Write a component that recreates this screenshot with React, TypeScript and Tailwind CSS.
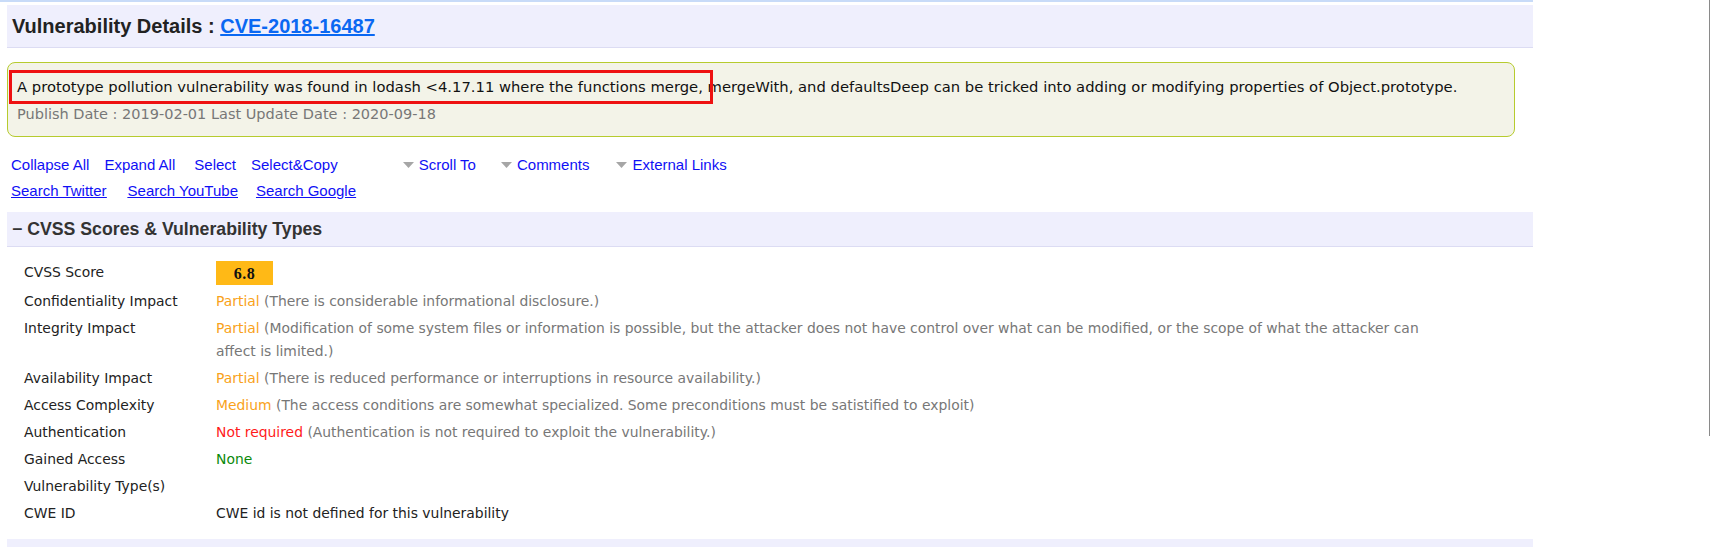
const rows: { label: string; value?: string; tone?: string; note?: string; plain?: string; score?: boolean }[] = [
  { label: "CVSS Score", score: true },
  { label: "Confidentiality Impact", value: "Partial", tone: "text-[#f9a21a]", note: "(There is considerable informational disclosure.)" },
  {
    label: "Integrity Impact",
    value: "Partial",
    tone: "text-[#f9a21a]",
    note: "(Modification of some system files or information is possible, but the attacker does not have control over what can be modified, or the scope of what the attacker can affect is limited.)",
  },
  { label: "Availability Impact", value: "Partial", tone: "text-[#f9a21a]", note: "(There is reduced performance or interruptions in resource availability.)" },
  {
    label: "Access Complexity",
    value: "Medium",
    tone: "text-[#f9a21a]",
    note: "(The access conditions are somewhat specialized. Some preconditions must be satistified to exploit)",
  },
  { label: "Authentication", value: "Not required", tone: "text-[#ff1a1a]", note: "(Authentication is not required to exploit the vulnerability.)" },
  { label: "Gained Access", value: "None", tone: "text-[#0a8a0a]" },
  { label: "Vulnerability Type(s)" },
  { label: "CWE ID", plain: "CWE id is not defined for this vulnerability" },
];

function Caret() {
  return (
    <svg width="11" height="7" viewBox="0 0 11 7" className="mr-[5px] inline-block">
      <polygon points="0,0 11,0 5.5,6" fill="#a6a6a6" />
    </svg>
  );
}

export default function App() {
  return (
    <div className="flex h-[547px] w-[1710px] justify-between overflow-hidden bg-white font-['Liberation_Sans',Arial,sans-serif]">
      <div className="w-[1533px] border-t-2 border-[#c8dbf8] pl-[7px]">
        <div className="mt-[3px] flex h-[43px] items-center border-b border-[#dcdcf3] bg-[#efeffd] pl-[5px]">
          <h1 className="text-[20px] font-bold text-[#222]">
            Vulnerability Details :{" "}
            <a href="#" className="text-[#0a68f2] underline">
              CVE-2018-16487
            </a>
          </h1>
        </div>

        <div className="relative mr-[18px] mt-[14px] h-[75px] rounded-[8px] border border-[#b6cb2e] bg-[#f3f3e8] px-[9px] pt-[14px] font-['DejaVu_Sans',Verdana,sans-serif]">
          <p className="text-[14.75px] leading-[20px] text-[#111]">
            A prototype pollution vulnerability was found in lodash &lt;4.17.11 where the functions merge, mergeWith, and
            defaultsDeep can be tricked into adding or modifying properties of Object.prototype.
          </p>
          <p className="mt-[7px] text-[14.5px] leading-[20px] text-[#777]">Publish Date : 2019-02-01 Last Update Date : 2020-09-18</p>
          <div className="pointer-events-none absolute left-[1px] top-[7px] h-[34px] w-[704px] border-[3px] border-[#ee1111]" />
        </div>

        <div className="mt-[15px] pl-[4px] text-[15px] leading-[26px] text-[#1010f5]">
          <div className="flex items-center">
            <a href="#" className="mr-[15px]">Collapse All</a>
            <a href="#" className="mr-[19px]">Expand All</a>
            <a href="#" className="mr-[15px]">Select</a>
            <a href="#" className="mr-[65px]">Select&amp;Copy</a>
            <a href="#" className="mr-[25px] flex items-center"><Caret />Scroll To</a>
            <a href="#" className="mr-[27px] flex items-center"><Caret />Comments</a>
            <a href="#" className="flex items-center"><Caret />External Links</a>
          </div>
          <div className="flex items-center underline">
            <a href="#" className="mr-[21px]">Search Twitter</a>
            <a href="#" className="mr-[18px]">Search YouTube</a>
            <a href="#">Search Google</a>
          </div>
        </div>

        <div className="mt-[8px] flex h-[35px] items-center border-b border-[#dcdcf3] bg-[#efeffd] pl-[5px]">
          <h2 className="text-[17.7px] font-bold text-[#333]">− CVSS Scores &amp; Vulnerability Types</h2>
        </div>

        <div className="mt-[11px] pl-[17px] font-['DejaVu_Sans',Verdana,sans-serif] text-[13.9px] leading-[23px] text-[#222]">
          {rows.map((r) => (
            <div key={r.label} className={`flex ${r.score ? "py-[3px]" : "py-[2px]"}`}>
              <div className="w-[192px] shrink-0">{r.label}</div>
              <div className="w-[1245px]">
                {r.score && (
                  <div className="flex h-[24px] w-[57px] items-center justify-center bg-[#ffb916] font-['Liberation_Serif',serif] text-[16px] font-bold tracking-[0.5px] text-[#111]">
                    6.8
                  </div>
                )}
                {r.value && <span className={r.tone}>{r.value}</span>}
                {r.note && <span className="text-[#777]"> {r.note}</span>}
                {r.plain && <span>{r.plain}</span>}
              </div>
            </div>
          ))}
        </div>

        <div className="mt-[12px] h-[20px] bg-[#efeffd]" />
      </div>
      <div className="h-[436px] w-px bg-[#8a8a8a]" />
    </div>
  );
}
